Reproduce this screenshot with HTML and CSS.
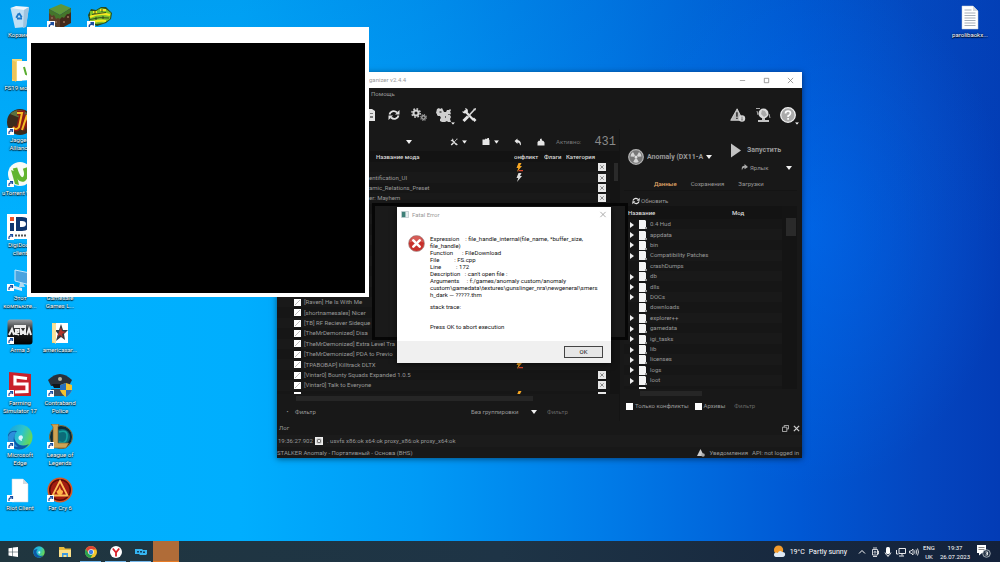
FILE: index.html
```html
<!DOCTYPE html>
<html lang="ru">
<head>
<meta charset="utf-8">
<title>Desktop</title>
<link rel="stylesheet" href="styles.css">
</head>
<body>
<svg class="defs" aria-hidden="true">
  <symbol id="shortcut" viewBox="0 0 7 7"><path fill="#fff" d="M0 0h7v7H0z"/><path fill="none" stroke="#1c4ea0" stroke-width="1.200" d="M2 6V4.200Q2 3 5 2.600M3 1.500h2.500V4"/></symbol>
  <symbol id="doc" viewBox="0 0 26 26"><path fill="#fff" stroke="#c4ccd4" stroke-width=".5" d="M5 2h11l5 5v18H5z"/><path fill="#d5dade" d="M16 2v5h5z"/></symbol>
  <symbol id="file" viewBox="0 0 8 9"><path fill="#f4f4f4" d="M0 0h6l1 1v8H0z"/><path fill="#999" d="M6 7h2v2H6z"/></symbol>
  <symbol id="caret" viewBox="0 0 6 4"><path fill="#f0f0f0" d="M0 0h6L3 4z"/></symbol>
  <symbol id="tri" viewBox="0 0 4 6"><path fill="#f0f0f0" d="M0 0l4 3-4 3z"/></symbol>
  <symbol id="bolt" viewBox="0 0 8 9"><path fill="currentColor" d="M3.500 0h3L5 3h2L2 9l1.300-4H1.500z"/></symbol>
  <symbol id="boltred" viewBox="0 0 8 9"><path fill="#f5a623" d="M3.500 0h3L5 3h2L2 9l1.300-4H1.500z"/><path fill="#d8432b" d="M4 7h4v1.300H3z"/></symbol>
  <symbol id="cat" viewBox="0 0 8 8"><path fill="#e8e8e8" d="M0 0h8v8H0z"/><path fill="none" stroke="#8a8a8a" d="M2.300 2.300l3.400 3.400M5.700 2.300L2.300 5.700"/></symbol>
  <symbol id="refresh" viewBox="0 0 12 12"><path fill="none" stroke="#e2e2e2" stroke-width="1.800" d="M1.500 5.500C2 2.500 6 .8 9 3.500M10.500 6.500C10 9.500 6 11.200 3 8.500"/><path fill="#e2e2e2" d="M11.500 1v4.500H7zM.5 11V6.500H5z"/></symbol>
  <symbol id="tools" viewBox="0 0 16 16"><path fill="none" stroke="#e6e6e6" stroke-width="2.200" d="M3.500 3.500l9 9.500"/><path fill="#e6e6e6" d="M1 4.500A3.500 3.500 0 0 0 5.500 6L7 4.500A3.500 3.500 0 0 0 4 1l1 2.500L3.500 4.500z"/><path fill="none" stroke="#d8d8d8" stroke-width="1.600" d="M13.500 2.500L7 9.500"/><path fill="none" stroke="#e6e6e6" stroke-width="3" d="M7 9.500L2.500 14"/><path fill="#e6e6e6" d="M12 2l3-1-.5 2.500zM11 12l2-1.500 2.500 2.500-2 2z"/></symbol>
  <symbol id="gear" viewBox="0 0 12 12"><circle cx="6" cy="6" r="3" fill="none" stroke="currentColor" stroke-width="2.400"/><circle cx="6" cy="6" r="5" fill="none" stroke="currentColor" stroke-width="1.800" stroke-dasharray="2 1.930"/></symbol>
  <symbol id="warn" viewBox="0 0 18 16"><path fill="#b9b9b9" stroke="#e8e8e8" stroke-width=".8" d="M8 1l6.500 13H.8z"/><path stroke="#222" stroke-width="1.600" d="M7.800 5v5M7.800 11v1.500"/><circle cx="13.500" cy="12" r="3.600" fill="#d6d6d6"/><path stroke="#444" d="M13.500 10v1M13.500 11.800v2.400"/></symbol>
</svg>

<main class="desktop">
  <div class="icons">
    <a class="item" href="#"><svg viewBox="0 0 26 26"><path fill="#cfe4f4" opacity=".92" d="M3.500 4L22 3l-3 20-11 1z"/><path fill="#eef6fc" d="M3.500 4L9 2l13 1-5 3z"/><path fill="#9fc3de" d="M17 6l5-3-3 20-3 1z"/><path fill="none" stroke="#1b76c8" stroke-width="1.800" stroke-dasharray="5 2" d="M12 9l3.500 5.500H8.800z"/></svg><span>Корзина</span></a>
    <a class="item" href="#"><svg viewBox="0 0 26 26"><path fill="#5d963a" d="M2 5l12-5 10 4-11 7z"/><path fill="#5b3d28" d="M2 5l11 6v14L2 19z"/><path fill="#43291b" d="M13 11l11-7v15l-11 6z"/><path fill="#44752b" d="M2 5l11 6v4l-2-1-2 1-2-4-2 1-3-3zM13 11l11-7v4l-2 2-2 0-3 4-2-1-2 2z"/><path fill="#83604a" d="M4 13h2v2H4zM8 17h2v2H8zM16 17h2v2h-2zM20 12h2v2h-2z"/><use href="#shortcut" x="0" y="17" width="8" height="8"/></svg></a>
    <a class="item" href="#"><svg viewBox="0 0 26 26"><path fill="#2a4a1a" d="M1 11l3-6 5 1 5-3 5 0 6 6-1 6-5 4-9 3-7-3z"/><path fill="#7cbf2c" d="M3 7l6 0 5-3 5 1 5 4-1 6-6 4-8 1-6-3z"/><path fill="none" stroke="#f6e820" stroke-width="2.200" d="M3 13q9-5 20-2M6 18q7-2 13-1M6 8l4 0M13 6l6 0"/><path fill="none" stroke="#26331b" stroke-width=".8" d="M3 15.500q10-3 19-1.500M5 10.500l14-2M8 7v3M15 5v3M9 13v3M16 12v3"/><use href="#shortcut" x="0" y="17" width="8" height="8"/></svg></a>

    <a class="item" href="#"><svg viewBox="0 0 26 26"><path fill="#f6d879" d="M5 2h10v22H5z"/><path fill="#fff" d="M10 4h13v19l-13 1z"/><path fill="#ecc45c" d="M5 3l4 2v20l-4-3z"/><circle cx="20" cy="14" r="6" fill="#fff"/><path fill="none" stroke="#5aad30" stroke-width="2" d="M17 10l2 7q3 2 5-1"/></svg><span>FS19 моды</span></a>
    <i></i><i></i>

    <a class="item" href="#"><svg viewBox="0 0 26 26"><circle cx="13" cy="13" r="13" fill="#3b2b1c"/><path fill="#5d7040" d="M3 5q9-8 18 0l-8 4z"/><path fill="none" stroke="#8f1b12" stroke-width="5" d="M10 4h5l-3 14q-3 4-6 0M15 21l5-15 2 14"/><path fill="none" stroke="#f4bd25" stroke-width="2" d="M10 4h5l-3 14q-3 4-6 0M15 21l5-15 2 14"/><use href="#shortcut" y="19" width="7" height="7"/></svg><span>Jagged Alliance</span></a>
    <i></i><i></i>

    <a class="item" href="#"><svg viewBox="0 0 26 26"><circle cx="13" cy="12" r="12" fill="#f8fbf6"/><path fill="none" stroke="#62b52f" stroke-width="4.500" d="M8 6q4 14 9 11 4-3 1-11"/><path fill="#62b52f" d="M4 8l5 2 3 13-4-1z"/><use href="#shortcut" y="18" width="7" height="7"/></svg><span>uTorrent Web</span></a>
    <i></i><i></i>

    <a class="item" href="#"><svg viewBox="0 0 26 26"><path fill="#fff" d="M0 0h26v25H0z"/><path fill="#e8502a" d="M3 3h4v4H3z"/><path fill="#10366e" d="M3 9h4v8H3z"/><path fill="none" stroke="#10366e" stroke-width="4" d="M11 5h4q6 0 6 5t-6 5h-4z"/><path stroke="#555" stroke-width="2" stroke-dasharray="2 1" d="M8 21.500h16"/><use href="#shortcut" y="19" width="7" height="7"/></svg><span>DigiDoc4 client</span></a>
    <i></i><i></i>

    <a class="item" href="#"><svg viewBox="0 0 26 26"><path fill="#4aa3df" stroke="#c6e7fa" d="M8 3l15 3v12L8 14z"/><path fill="#b4d9ef" d="M13 16h3l2 4h-6z"/><path fill="#dcecf7" d="M4 18l11 3v3L4 21z"/><use href="#shortcut" y="17" width="7" height="7"/></svg><span>Этот компьюте...</span></a>
    <a class="item" href="#"><svg viewBox="0 0 26 26"></svg><span>Gamesale Games L...</span></a>
    <i></i>

    <a class="item" href="#"><svg viewBox="0 0 26 26"><defs><linearGradient id="ar" x2="0" y2="1"><stop stop-color="#9a9fa3"/><stop offset=".45" stop-color="#222"/><stop offset="1" stop-color="#000"/></linearGradient></defs><rect width="25" height="25" x=".5" y=".5" rx="3" fill="url(#ar)"/><path fill="none" stroke="#eee" stroke-width="2" d="M2 16l3-6 2 6M9 16v-5h2.500v2L9 14l3 2M14 16v-5l2 3 2-3v5M20 16l2-6 2 6"/><path fill="#eee" d="M7 6h12v3H7z"/><use href="#shortcut" y="18" width="7" height="7"/></svg><span>Arma 3</span></a>
    <a class="item" href="#"><svg viewBox="0 0 26 26"><path fill="#f4d06a" d="M5 4h9l1 20H5z"/><path fill="#fff" d="M9 4h12v20H9z"/><path fill="#32393f" d="M14 5l2 6 5 0-4 4 1 6-4-3-5 4 2-7-3-4h4z"/><path fill="#b0352c" d="M14 8l1 4 4 1-4 2 1 4-3-3-3 2z"/><path fill="#f8e29c" d="M5 4l4 1v20l-4-3z"/></svg><span>americasar...</span></a>
    <i></i>

    <a class="item" href="#"><svg viewBox="0 0 26 26"><path fill="#c9202a" d="M2 0l22 2v22L2 24z"/><path fill="none" stroke="#fff" stroke-width="3.200" d="M20 6.500L8 5v7h12v7.500L8 20"/><use href="#shortcut" y="18" width="7" height="7"/></svg><span>Farming Simulator 17</span></a>
    <a class="item" href="#"><svg viewBox="0 0 26 26"><path fill="#29313b" d="M1 8q12-12 24 0l-3 6H4z"/><path fill="#11161c" d="M5 12h16l-2 4H7z"/><circle cx="13" cy="7" r="2" fill="#b8b7a0"/><path fill="#424b57" d="M4 17h13v7H6z"/><path fill="#f3c230" d="M13 13l6-2 6 2v5q-2 5-6 7-4-2-6-7z"/><path fill="#2570c0" d="M19 11l-6 2v5h6zM19 18h6q-2 5-6 7z"/><use href="#shortcut" y="18" width="7" height="7"/></svg><span>Contraband Police</span></a>
    <i></i>

    <a class="item" href="#"><svg viewBox="0 0 26 26"><defs><linearGradient id="eg" x2="1" y2=".4"><stop stop-color="#169ee0"/><stop offset=".6" stop-color="#2bc3cf"/><stop offset="1" stop-color="#65d65a"/></linearGradient></defs><circle cx="13" cy="13" r="12.500" fill="url(#eg)"/><path fill="#0d59a8" d="M1 11q2-5 9-4-5 5-1 11 5 6 13 2-4 6-11 5.500Q1 24 1 11z"/><path fill="#2c8edb" d="M9 8q-6 9 2 15-10 0-10-10 2-6 8-5z"/><path fill="#d8f5ff" d="M12 12q4-2 4 2-2 1-1 3-5-1-3-5z"/><use href="#shortcut" y="18" width="7" height="7"/></svg><span>Microsoft Edge</span></a>
    <a class="item" href="#"><svg viewBox="0 0 26 26"><circle cx="14" cy="13" r="11.500" fill="#0b2c38" stroke="#8b7440"/><circle cx="15" cy="13" r="8" fill="#0c6b78"/><path fill="none" stroke="#16a3a0" stroke-width="1.500" d="M12 8q9-3 8 5t-8 5"/><path fill="#cda353" stroke="#6f5325" stroke-width=".6" d="M4 0h8l-1 3v16h11l-3 5H4l2-3V3z"/><use href="#shortcut" y="18" width="7" height="7"/></svg><span>League of Legends</span></a>
    <i></i>

    <a class="item" href="#"><svg viewBox="0 0 26 26"><use href="#doc"/><use href="#shortcut" y="18" width="7" height="7"/></svg><span>Riot Client</span></a>
    <a class="item" href="#"><svg viewBox="0 0 26 26"><circle cx="13" cy="13" r="11.800" fill="#5e0d09" stroke="#d85a26" stroke-width="1.500"/><circle cx="13" cy="13" r="9.500" fill="#a31c11"/><path fill="none" stroke="#ffbd58" stroke-width="1.800" d="M13 4l7.500 14.500h-15z"/><path fill="#ffb347" d="M13 9q0 4 3 5 0 4-3 4t-3.500-4q2 0 3.500-5z"/><use href="#shortcut" y="18" width="7" height="7"/></svg><span>Far Cry 6</span></a>
    <i></i>
  </div>
  <div class="icons icons-right">
    <a class="item" href="#"><svg viewBox="0 0 26 26"><use href="#doc"/><path stroke="#8f9aa6" stroke-width=".8" d="M7.500 6h7M7.500 9h11M7.500 11.500h11M7.500 14h11M7.500 16.500h11M7.500 19h11M7.500 21.500h11"/></svg><span>parolibaokx...</span></a>
  </div>

  <section class="window organizer">
    <header class="titlebar">
      <span class="title">ganizer v2.4.4</span>
      <button class="winbtn" aria-label="Свернуть"><svg viewBox="0 0 8 8"><path stroke="#888" stroke-width=".8" d="M1 4h6"/></svg></button>
      <button class="winbtn" aria-label="Развернуть"><svg viewBox="0 0 8 8"><path fill="none" stroke="#777" stroke-width=".8" d="M1.500 1.500h5v5h-5z"/></svg></button>
      <button class="winbtn" aria-label="Закрыть"><svg viewBox="0 0 8 8"><path stroke="#777" stroke-width=".8" d="M1 1l6 6M7 1L1 7"/></svg></button>
    </header>
    <nav class="menu"><button>Помощь</button></nav>
    <div class="toolbar">
      <button aria-label="Архив"><svg viewBox="0 0 16 16"><path fill="#e4e4e4" d="M2 2h9l3 2v10H2z"/><path fill="#777" d="M9 6h3v1H9zM9 9h3v2H9z"/></svg></button>
      <button aria-label="Обновить"><svg viewBox="-2 -2 16 16"><use href="#refresh" width="12" height="12"/></svg></button>
      <button aria-label="Настройки"><svg viewBox="0 0 16 16"><g color="#d2d2d2"><use href="#gear" x="0" y="1" width="10" height="10"/></g><g color="#a5a5a5"><use href="#gear" x="9" y="7" width="7" height="7"/></g></svg></button>
      <button aria-label="Исполняемые файлы"><svg viewBox="0 0 16 16"><path fill="#d0d0d0" d="M1 2l2-1 1 1 2-1 1 2 1 2 2 0 1-2 2 0 1-1 1 1-1 2 1 1-1 2 1 2-1 2 1 3-3 0-1-1-2 1-3 0-2-1 0-2 1-1-1-2-2 0-1-1 0-1-1-1z"/><path fill="#666" d="M3.500 4h2v2h-2zM9 9h1v2H9zM12 7h2v1h-2z"/></svg><svg class="drop" viewBox="0 0 6 4"><use href="#caret"/></svg></button>
      <button aria-label="Инструменты"><svg viewBox="0 0 16 16"><use href="#tools"/></svg></button>
      <span class="grow"></span>
      <button aria-label="Предупреждения"><svg viewBox="0 0 18 16"><use href="#warn"/></svg></button>
      <button aria-label="Сеть"><svg viewBox="0 0 16 16"><circle cx="8.500" cy="6.500" r="5" fill="#dcdcdc"/><path fill="#aaa" d="M7 3l3 1 2 4-3 2-3-3z"/><path fill="none" stroke="#aaa" d="M1 1.500h4M2 4l1 4M14 7l1 4"/><path fill="#c4c4c4" d="M7 11h3v2h4v2H3v-2h4z"/></svg></button>
      <button aria-label="Справка"><svg viewBox="0 0 16 16"><circle cx="8" cy="8" r="7.300" fill="#aaa" stroke="#f0f0f0" stroke-width="1.300"/><path fill="none" stroke="#fff" stroke-width="1.700" d="M5.500 6.500q0-2.500 2.500-2.500t2.500 2.200q0 1.300-2.400 2.800v1M8.100 11v1.700"/></svg><svg class="drop" viewBox="0 0 6 4"><use href="#caret"/></svg></button>
    </div>

    <div class="panes">
      <section class="mods">
        <div class="modbar">
          <select class="profile" aria-label="Профиль"><option></option></select>
          <svg class="caret" viewBox="0 0 6 4"><use href="#caret"/></svg>
          <button class="mini first" aria-label="Действия"><svg viewBox="0 0 16 16"><use href="#tools"/></svg><svg class="sub" viewBox="0 0 6 4"><use href="#caret"/></svg></button>
          <button class="mini" aria-label="Папки"><svg viewBox="0 0 16 16"><path fill="#e6e6e6" d="M1 3h5l1-2 3 1 1-2h3v3l1 1v10H1z"/></svg><svg class="sub" viewBox="0 0 6 4"><use href="#caret"/></svg></button>
          <button class="mini" aria-label="Восстановить"><svg viewBox="0 0 16 16"><path fill="#e6e6e6" d="M1 6l6-5v3q7 1 7 9l-2 2q0-6-5-6v3z"/></svg></button>
          <button class="mini" aria-label="Резервная копия"><svg viewBox="0 0 16 16"><path fill="#e6e6e6" d="M1 15V8l3-3 2 1V2l3-1 1 4 3 1 2 3v6z"/></svg></button>
          <span class="active-label">Активно:</span>
          <output class="lcd">431</output>
        </div>
        <div class="modlist">
          <table>
            <colgroup><col class="c-name"><col class="c-conf"><col class="c-flag"><col class="c-cat"></colgroup>
            <thead><tr><th class="h-name">Название мода</th><th>онфликт</th><th>Флаги</th><th>Категория</th></tr></thead>
            <tbody>
              <tr><td></td><td><svg class="bolt" viewBox="0 0 8 9"><use href="#boltred"/></svg></td><td></td><td><svg class="cat" viewBox="0 0 8 8"><use href="#cat"/></svg></td></tr>
              <tr><td class="cut">entification_UI</td><td><svg class="bolt" viewBox="0 0 8 9"><use href="#bolt"/></svg></td><td></td><td><svg class="cat" viewBox="0 0 8 8"><use href="#cat"/></svg></td></tr>
              <tr><td class="cut">amic_Relations_Preset</td><td></td><td></td><td><svg class="cat" viewBox="0 0 8 8"><use href="#cat"/></svg></td></tr>
              <tr><td class="cut">er: Mayhem</td><td></td><td></td><td><svg class="cat" viewBox="0 0 8 8"><use href="#cat"/></svg></td></tr>
              <tr><td></td><td></td><td></td><td></td></tr>
              <tr><td></td><td></td><td></td><td></td></tr>
              <tr><td></td><td></td><td></td><td></td></tr>
              <tr><td></td><td></td><td></td><td></td></tr>
              <tr><td></td><td></td><td></td><td></td></tr>
              <tr><td></td><td></td><td></td><td></td></tr>
              <tr><td></td><td></td><td></td><td></td></tr>
              <tr><td></td><td></td><td></td><td></td></tr>
              <tr><td></td><td></td><td></td><td></td></tr>
              <tr><td><label><input type="checkbox" checked>[Raven] He Is With Me</label></td><td></td><td></td><td></td></tr>
              <tr><td><label><input type="checkbox" checked>[shortnamesalex] Nicer</label></td><td></td><td></td><td></td></tr>
              <tr><td><label><input type="checkbox" checked>[TB] RF Reciever Sideque</label></td><td></td><td></td><td></td></tr>
              <tr><td><label><input type="checkbox" checked>[TheMrDemonized] Disa</label></td><td></td><td></td><td></td></tr>
              <tr><td><label><input type="checkbox" checked>[TheMrDemonized] Extra Level Tra</label></td><td></td><td></td><td></td></tr>
              <tr><td><label><input type="checkbox" checked>[TheMrDemonized] PDA to Previo</label></td><td></td><td></td><td></td></tr>
              <tr><td><label><input type="checkbox" checked>[TPABOBAP] Killtrack DLTX</label></td><td><svg class="bolt" viewBox="0 0 8 9"><use href="#boltred"/></svg></td><td></td><td></td></tr>
              <tr><td><label><input type="checkbox" checked>[Vintar0] Bounty Squads Expanded 1.0.5</label></td><td></td><td></td><td><svg class="cat" viewBox="0 0 8 8"><use href="#cat"/></svg></td></tr>
              <tr><td><label><input type="checkbox" checked>[Vintar0] Talk to Everyone</label></td><td></td><td></td><td><svg class="cat" viewBox="0 0 8 8"><use href="#cat"/></svg></td></tr>
              <tr><td><label><input type="checkbox" aria-label="Мод"></label></td><td><svg class="bolt" viewBox="0 0 8 9"><use href="#boltred"/></svg></td><td></td><td><svg class="cat" viewBox="0 0 8 8"><use href="#cat"/></svg></td></tr>
            </tbody>
          </table>
          <div class="vscroll"><span></span></div>
        </div>
        <div class="hscroll"><span></span></div>
        <div class="modfoot">
          <button class="filter-toggle"><span class="dot">•</span>Фильтр</button>
          <select class="group" aria-label="Группировка"><option>Без группировки</option></select>
          <svg class="caret" viewBox="0 0 6 4"><use href="#caret"/></svg>
          <input class="modfilter" type="text" placeholder="Фильтр" aria-label="Фильтр модов">
        </div>
      </section>

      <section class="data">
        <div class="launch">
          <svg class="rad" viewBox="0 0 16 16"><circle cx="8" cy="8" r="7.300" fill="#777" stroke="#b4b4b4" stroke-width="1.200"/><circle cx="8" cy="8" r="1.500" fill="#ddd"/><path fill="#d4d4d4" d="M2.500 7.500q0-3 2.500-4.500l2 3.500-1 1.300zM13.500 7.500q0-3-2.500-4.500L9 6.500l1 1.300zM5.200 13l2-3.500h1.600l2 3.500q-2.800 1.500-5.600 0z"/></svg>
          <select class="exe" aria-label="Программа"><option>Anomaly (DX11-A</option></select>
          <svg class="caret" viewBox="0 0 6 4"><use href="#caret"/></svg>
          <div class="runs">
            <button class="run"><svg viewBox="0 0 10 14"><path fill="#c2c2c2" d="M0 0l10 7-10 7z"/></svg>Запустить</button>
            <button class="link"><svg viewBox="0 0 8 8"><path fill="#aaa" d="M1 7Q0 2 4 2V0l4 3.500L4 6V4Q2 4 1 7z"/></svg>Ярлык<svg class="caret end" viewBox="0 0 6 4"><use href="#caret"/></svg></button>
          </div>
        </div>
        <div class="tabs"><button class="on">Данные</button><button>Сохранения</button><button>Загрузки</button></div>
        <div class="tabpage">
          <button class="reload"><svg viewBox="0 0 12 12"><use href="#refresh"/></svg>Обновить</button>
          <div class="tree">
            <table>
              <thead><tr><th>Название</th><th class="c-mod">Мод</th></tr></thead>
              <tbody>
                <tr><td><svg class="tri" viewBox="0 0 4 6"><use href="#tri"/></svg><svg class="file" viewBox="0 0 8 9"><use href="#file"/></svg>0.4 Hud</td><td></td></tr>
                <tr><td><svg class="tri" viewBox="0 0 4 6"><use href="#tri"/></svg><svg class="file" viewBox="0 0 8 9"><use href="#file"/></svg>appdata</td><td></td></tr>
                <tr><td><svg class="tri" viewBox="0 0 4 6"><use href="#tri"/></svg><svg class="file" viewBox="0 0 8 9"><use href="#file"/></svg>bin</td><td></td></tr>
                <tr><td><svg class="tri" viewBox="0 0 4 6"><use href="#tri"/></svg><svg class="file" viewBox="0 0 8 9"><use href="#file"/></svg>Compatibility Patches</td><td></td></tr>
                <tr><td><svg class="tri" viewBox="0 0 4 6"></svg><svg class="file" viewBox="0 0 8 9"><use href="#file"/></svg>crashDumps</td><td></td></tr>
                <tr><td><svg class="tri" viewBox="0 0 4 6"><use href="#tri"/></svg><svg class="file" viewBox="0 0 8 9"><use href="#file"/></svg>db</td><td></td></tr>
                <tr><td><svg class="tri" viewBox="0 0 4 6"><use href="#tri"/></svg><svg class="file" viewBox="0 0 8 9"><use href="#file"/></svg>dlls</td><td></td></tr>
                <tr><td><svg class="tri" viewBox="0 0 4 6"><use href="#tri"/></svg><svg class="file" viewBox="0 0 8 9"><use href="#file"/></svg>DOCs</td><td></td></tr>
                <tr><td><svg class="tri" viewBox="0 0 4 6"></svg><svg class="file" viewBox="0 0 8 9"><use href="#file"/></svg>downloads</td><td></td></tr>
                <tr><td><svg class="tri" viewBox="0 0 4 6"><use href="#tri"/></svg><svg class="file" viewBox="0 0 8 9"><use href="#file"/></svg>explorer++</td><td></td></tr>
                <tr><td><svg class="tri" viewBox="0 0 4 6"><use href="#tri"/></svg><svg class="file" viewBox="0 0 8 9"><use href="#file"/></svg>gamedata</td><td></td></tr>
                <tr><td><svg class="tri" viewBox="0 0 4 6"><use href="#tri"/></svg><svg class="file" viewBox="0 0 8 9"><use href="#file"/></svg>igi_tasks</td><td></td></tr>
                <tr><td><svg class="tri" viewBox="0 0 4 6"><use href="#tri"/></svg><svg class="file" viewBox="0 0 8 9"><use href="#file"/></svg>lib</td><td></td></tr>
                <tr><td><svg class="tri" viewBox="0 0 4 6"><use href="#tri"/></svg><svg class="file" viewBox="0 0 8 9"><use href="#file"/></svg>licenses</td><td></td></tr>
                <tr><td><svg class="tri" viewBox="0 0 4 6"><use href="#tri"/></svg><svg class="file" viewBox="0 0 8 9"><use href="#file"/></svg>logs</td><td></td></tr>
                <tr><td><svg class="tri" viewBox="0 0 4 6"><use href="#tri"/></svg><svg class="file" viewBox="0 0 8 9"><use href="#file"/></svg>loot</td><td></td></tr>
                <tr><td><svg class="tri" viewBox="0 0 4 6"></svg><svg class="file" viewBox="0 0 8 9"><use href="#file"/></svg></td><td></td></tr>
              </tbody>
            </table>
            <div class="vscroll"><span></span></div>
          </div>
          <div class="hscroll short"><span></span></div>
          <div class="treefoot">
            <label><input type="checkbox">Только конфликты</label>
            <label><input type="checkbox">Архивы</label>
            <input class="treefilter" type="text" placeholder="Фильтр" aria-label="Фильтр файлов">
          </div>
        </div>
      </section>
    </div>

    <div class="loghead"><span>Лог</span>
      <button aria-label="Открепить"><svg viewBox="0 0 8 8"><path fill="none" stroke="#bbb" d="M2.500 2.500v-2h5v4h-2M.5 2.500h5v5h-5z"/></svg></button>
      <button aria-label="Закрыть лог"><svg viewBox="0 0 8 8"><path stroke="#ccc" stroke-width="1.500" d="M1 1l6 6M7 1L1 7"/></svg></button>
    </div>
    <div class="logline"><time>19:36:27.902</time><svg viewBox="0 0 9 9"><path fill="#eee" d="M0 0h9v9H0z"/><path fill="#777" d="M2 2h5v5H2z"/><path stroke="#fff" d="M3 3l3 3M6 3L3 6"/></svg><span>. usvfs x86:ok x64:ok proxy_x86:ok proxy_x64:ok</span></div>
    <footer class="status"><span>STALKER Anomaly - Портативный - Основа (BHS)</span><span class="grow"></span><svg viewBox="0 0 8 8"><path fill="#ccc" d="M3.500 0L7 7H0z"/><circle cx="6" cy="6" r="1.800" fill="#aaa"/></svg><span>Уведомления</span><span>API: not logged in</span></footer>
  </section>

  <div class="window splash"></div>

  <section class="window dialog" role="alertdialog" aria-label="Fatal Error">
    <header class="dlg-title"><svg viewBox="0 0 9 8"><path fill="#e8eef0" stroke="#9fb0b4" stroke-width=".6" d="M.5.5h8v7h-8z"/><path fill="#3f8078" d="M1 1h4v6H1z"/></svg><span>Fatal Error</span><button aria-label="Закрыть"><svg viewBox="0 0 8 8"><path stroke="#8a8a8a" stroke-width=".8" d="M1 1l6 6M7 1L1 7"/></svg></button></header>
    <div class="dlg-body">
      <svg viewBox="0 0 16 16"><circle cx="8" cy="8" r="7.500" fill="#c8312c" stroke="#a89a98" stroke-width=".7"/><path fill="#e07a74" opacity=".6" d="M1.500 7Q3 1 8 1t6.500 6q-6-3-13 0z"/><path stroke="#fff" stroke-width="2.400" stroke-linecap="round" d="M5 5l6 6M11 5l-6 6"/></svg>
      <div class="dlg-text">
<p>Expression    : file_handle_internal(file_name, *buffer_size,
file_handle)
Function      : FileDownload
File          : FS.cpp
Line          : 172
Description   : can't open file :
Arguments     : f:/games/anomaly custom/anomaly
custom\gamedata\textures\gunslinger_nra\newgeneral\smers
h_dark — ?????.thm</p>
<p>stack trace:</p>
<p class="last">Press OK to abort execution</p>
      </div>
    </div>
    <div class="dlg-foot"><button>OK</button></div>
  </section>

  <section class="window blank" aria-label="Окно"><div></div></section>
</main>

<footer class="taskbar">
  <button class="slot" aria-label="Пуск"><svg viewBox="0 0 12 12"><path fill="#fff" d="M1.500 2.300L5.500 1.700v4H1.500zM6 1.600L11 1v4.700H6zM1.500 6.200h4v4l-4-.6zM6 6.200h5V11l-5-.7z"/></svg></button>
  <button class="slot" aria-label="Edge"><svg viewBox="0 0 26 26"><circle cx="13" cy="13" r="12.500" fill="url(#eg)"/><path fill="#0d59a8" d="M1 11q2-5 9-4-5 5-1 11 5 6 13 2-4 6-11 5.500Q1 24 1 11z"/><path fill="#d8f5ff" d="M12 12q4-2 4 2-2 1-1 3-5-1-3-5z"/></svg></button>
  <button class="slot" aria-label="Проводник"><svg viewBox="0 0 12 12"><path fill="#e9b93a" d="M0 1h5l1 1.500h6V11H0z"/><path fill="#fbe08a" d="M0 4h12v7H0z"/><path fill="#3f9be0" d="M3 7h6v4H7.500V9h-3v2H3z"/></svg></button>
  <button class="slot running" aria-label="Chrome"><svg viewBox="0 0 12 12"><circle cx="6" cy="6" r="6" fill="#f5c52b"/><path fill="#dc4437" d="M.8 3A6 6 0 0 1 11.200 3L11.200 3.500H6L3.500 7.500z"/><path fill="#27a152" d="M.8 3A6 6 0 0 0 5.500 12L8.300 7.300 6 8.500 3.500 7.500z"/><circle cx="6" cy="6" r="2.800" fill="#fff"/><circle cx="6" cy="6" r="2.200" fill="#3c7ee8"/></svg></button>
  <button class="slot running" aria-label="Яндекс"><svg viewBox="0 0 12 12"><circle cx="6" cy="6" r="6" fill="#fff"/><path fill="none" stroke="#d8202a" stroke-width="1.800" d="M2.800 2.500L6 6.500l3.200-4M6 6v4.500"/></svg></button>
  <button class="slot running" aria-label="Приложение"><svg viewBox="0 0 12 12"><path fill="#35b5f2" d="M0 3h7l1 1h4v4l-1 1H5L4 8H0z"/><path fill="#14405e" d="M2 5h2v1.500H2zM5 5h2v1.500H5zM8 5.500h2V7H8z"/></svg></button>
  <button class="slot current" aria-label="Текущее окно"></button>
  <span class="grow"></span>
  <button class="weather"><svg viewBox="0 0 14 14"><circle cx="6" cy="5.500" r="5" fill="#f49b2b"/><path fill="#dfe9f4" d="M3 13q-3-1-1.500-4Q3 7.500 5 8.500 7 5 10 7.500q3.500 0 3 3.500-1 2-3 2z"/></svg><span>19°C</span><span>Partly sunny</span></button>
  <div class="tray">
    <svg viewBox="0 0 10 10"><path fill="none" stroke="#fff" d="M2 6.500L5 3.500l3 3"/></svg>
    <svg viewBox="0 0 10 10"><path fill="none" stroke="#fff" stroke-width=".8" d="M3 1h4M2.500 2.500h5v5.500h-5zM7.500 4.500l1-.5v3l-1-.5M3 9.500h4"/><circle cx="5" cy="5.200" r="1" fill="none" stroke="#fff" stroke-width=".7"/></svg>
    <svg viewBox="0 0 10 10"><rect x="3" y="0" width="4" height="7" rx="1.500" fill="#fff"/><path fill="none" stroke="#fff" stroke-width=".8" d="M2 5.500q1 3 3 3t3-3M5 8v2"/></svg>
    <svg viewBox="0 0 10 10"><path fill="none" stroke="#fff" stroke-width=".9" d="M3 1.500h6.500v5H3zM6 6.500v2M3 9h5M.5 3v4h2"/></svg>
    <svg viewBox="0 0 10 10"><path fill="none" stroke="#fff" stroke-width=".8" d="M.5 4h1.500L4 2v6L2 6H.5zM5.500 3.500q1 1.500 0 3M7 2.500q1.500 2.500 0 5M8.500 1.500q2 3.500 0 7"/></svg>
  </div>
  <div class="stack lang"><span>ENG</span><span>UK</span></div>
  <div class="stack clock"><span>19:37</span><span>26.07.2023</span></div>
  <button class="notes" aria-label="Уведомления"><svg viewBox="0 0 14 13"><path fill="#fff" d="M0 0h9v8H5l-3 2.500V8H0z"/><path stroke="#555" stroke-width=".7" d="M1.500 2.500h6M1.500 4.500h6"/><circle cx="9.500" cy="8.500" r="3.800" fill="#2c3a4d" stroke="#cfd5db" stroke-width=".7"/><path fill="none" stroke="#fff" stroke-width=".8" d="M8.500 7h2v1.500h-1 1V10h-2"/></svg></button>
</footer>
</body>
</html>
```
FILE: styles.css
```css
* { box-sizing: border-box; }
html, body { height: 100%; }
body {
  margin: 0;
  display: flex;
  flex-direction: column;
  overflow: hidden;
  font: 6px/8px Roboto, "Noto Sans", sans-serif;
  color: #999;
}
svg { display: block; flex: none; }
button, input, select {
  margin: 0;
  padding: 0;
  border: 0;
  background: none;
  color: inherit;
  font: inherit;
  appearance: none;
}
p { margin: 0; }
.defs { position: absolute; width: 0; height: 0; }
.grow { flex: 1; }

/* Desktop */
.desktop {
  position: relative;
  flex: 1;
  min-height: 0;
  display: flex;
  justify-content: space-between;
  padding: 4px 0 12px;
  background:
    radial-gradient(ellipse 200px 260px at 81% 42%, rgba(0, 120, 255, .4), transparent),
    linear-gradient(180deg, rgba(0, 80, 180, .16), transparent 45%),
    linear-gradient(90deg, #00b2ff 0, #00aefe 24%, #009af6 42%, #007ce8 60%, #0058d4 80%, #0446c0 92%, #033cb6);
}
.icons {
  display: grid;
  grid-template-columns: repeat(3, 40px);
  grid-template-rows: repeat(10, 1fr);
}
.icons-right { grid-template-columns: 40px; padding-right: 10px; }
.item {
  display: flex;
  flex-direction: column;
  align-items: center;
  gap: 1px;
  min-height: 0;
  color: #fff;
  text-align: center;
  text-decoration: none;
  text-shadow: 0 1px 1px #000, 0 0 2px #000;
}
.item svg { width: 26px; height: 26px; }

.window { position: absolute; }

/* Blank window */
.blank {
  left: 27px;
  top: 27px;
  width: 342px;
  height: 270px;
  display: flex;
  padding: 16px 4px 4px;
  background: #fff;
}
.blank div { flex: 1; background: #000; }

/* Organizer */
.organizer {
  left: 277px;
  top: 72px;
  width: 525px;
  display: flex;
  flex-direction: column;
  background: #181818;
  box-shadow: 0 1px 6px rgba(0, 0, 0, .5);
}
.titlebar {
  display: flex;
  align-items: center;
  height: 16px;
  padding: 0 0 0 92px;
  background: #fff;
  color: #999;
}
.title { flex: 1; }
.winbtn { display: flex; justify-content: center; width: 24px; }
.winbtn svg { width: 7px; height: 7px; }
.menu { height: 13px; padding: 2px 0 0 94px; line-height: 8px; }
.menu button { display: block; }
.toolbar {
  display: flex;
  align-items: center;
  gap: 9px;
  height: 28px;
  padding: 0 6px 0 84px;
}
.toolbar button { position: relative; display: flex; }
.toolbar svg { width: 16px; height: 16px; }
.toolbar .drop { position: absolute; right: -3px; bottom: -2px; width: 4px; height: 3px; }
.caret { width: 6px; height: 4px; }
.panes { display: flex; gap: 4px; }

.mods { width: 343px; border-right: 1px solid #141414; }
.modbar {
  display: flex;
  align-items: center;
  height: 22px;
  padding-top: 4px;
}
.profile { width: 129px; }
.mini { display: flex; align-items: center; gap: 4px; margin-right: 15px; }
.mini.first { margin-left: 38px; }
.mini svg { width: 8px; height: 8px; }
.mini .sub { width: 5px; height: 4px; }
.active-label { color: #777; }
.mini:nth-last-child(3) { margin-right: 11px; }
.lcd { margin-left: auto; padding-right: 3px; font: 12px/16px "Liberation Mono", monospace; color: #8a8a8a; }

.modlist { display: flex; height: 243px; overflow: hidden; background: #161616; }
table { border-collapse: collapse; table-layout: fixed; }
th, td { height: 10px; padding: 0; line-height: 10px; text-align: left; white-space: nowrap; }
th { font-weight: 500; color: #d8d8d8; }
thead tr { height: 11px; background: #131313; }
tbody tr:nth-child(even) { background: #191919; }
.modlist table { width: 333px; height: 250px; }
.modlist th { overflow: hidden; }
.c-name { width: 237px; }
.c-conf { width: 30px; }
.c-flag { width: 22px; }
.h-name { padding-left: 99px; }
td.cut { padding-left: 92px; }
.modlist label { display: flex; align-items: center; gap: 3px; padding-left: 17px; }
input[type="checkbox"] { width: 7px; height: 7px; background: #fff; }
input[type="checkbox"]:checked {
  background: linear-gradient(135deg, transparent 46%, #bbb 46%, #bbb 56%, transparent 56%) center / 5px 5px no-repeat, #fff;
}
.bolt { width: 8px; height: 9px; margin-left: 1px; color: #ddd; }
.cat { width: 8px; height: 8px; margin-left: auto; margin-right: 4px; }
.vscroll { flex: 1; padding: 12px 1px 0 4px; background: #141414; }
.vscroll span { display: block; height: 18px; background: #2a2a2a; }
.hscroll { height: 8px; padding: 2px 86px 1px 19px; }
.hscroll span { display: block; height: 5px; background: #262626; }
.modfoot { display: flex; align-items: center; height: 19px; }
.filter-toggle { display: flex; gap: 6px; margin-left: 9px; }
.dot { width: 3px; }
.group { width: 60px; margin-left: auto; }
.modfilter { width: 82px; padding-left: 10px; }
::placeholder { color: #666; opacity: 1; }

.data { flex: 1; min-width: 0; padding-right: 5px; }
.launch { display: flex; align-items: center; height: 48px; padding: 8px 0 0 4px; }
.rad { width: 16px; height: 16px; margin-right: 3px; }
.exe { width: 59px; font: bold 7px/10px Roboto, sans-serif; }
.runs { flex: 1; display: flex; flex-direction: column; gap: 6px; margin-left: 19px; }
.run { display: flex; align-items: center; gap: 6px; height: 15px; font: bold 7px/10px Roboto, sans-serif; }
.run svg { width: 10px; height: 15px; }
.link { display: flex; align-items: center; gap: 2px; padding-left: 10px; }
.link svg { width: 7px; height: 7px; }
.link .end { width: 6px; height: 4px; margin-left: auto; margin-right: 5px; }
.tabs { display: flex; gap: 14px; height: 13px; padding-left: 30px; }
.tabs .on { color: #e0a868; font-weight: 500; }
.tabpage { padding-top: 4px; border-top: 1px solid #141414; }
.reload { display: flex; align-items: center; gap: 1px; height: 11px; padding-left: 8px; }
.reload svg { width: 8px; height: 8px; }
.tree { display: flex; height: 183px; overflow: hidden; background: #161616; }
.tree thead tr { height: 13px; }
.tree table { width: 158px; height: 190px; }
.tree th { padding-left: 4px; }
.tree .c-mod { width: 53px; padding-left: 3px; }
.tree td svg { display: inline-block; vertical-align: middle; }
.tri { width: 4px; height: 6px; margin: 0 5px 0 6px; }
.file { width: 8px; height: 9px; margin-right: 3px; }
.hscroll.short { padding: 2px 95px 1px 16px; }
.treefoot { display: flex; align-items: center; gap: 6px; height: 18px; padding-left: 2px; }
.treefoot label { display: flex; align-items: center; gap: 2px; white-space: nowrap; }
.treefilter { flex: 1; min-width: 0; padding-left: 3px; }

.loghead { display: flex; align-items: center; gap: 4px; height: 14px; padding: 0 2px; }
.loghead span { flex: 1; }
.loghead svg { width: 7px; height: 7px; }
.logline { display: flex; align-items: center; gap: 4px; height: 12px; padding-left: 1px; background: #1b1b1b; }
.logline svg { width: 8px; height: 8px; }
.logline time { width: 33px; }
.status { display: flex; align-items: center; gap: 4px; height: 11px; padding-right: 3px; }
.status svg { width: 8px; height: 8px; }

/* Splash */
.splash {
  left: 372px;
  top: 203px;
  width: 256px;
  height: 137px;
  border: 3px solid #060606;
  background: #1a1a1a;
}

/* Error dialog */
.dialog {
  left: 397px;
  top: 207px;
  width: 214px;
  background: #fff;
  color: #111;
  box-shadow: 0 1px 6px rgba(0, 0, 0, .6);
}
.dlg-title { display: flex; align-items: center; gap: 3px; height: 15px; padding: 0 4px; color: #999; }
.dlg-title span { flex: 1; }
.dlg-title svg { width: 8px; height: 7px; }
.dlg-body { display: flex; align-items: flex-start; gap: 5px; padding: 13px 10px 11px 11px; }
.dlg-body > svg { width: 17px; height: 17px; }
.dlg-text { line-height: 7px; white-space: pre; display: flex; flex-direction: column; }
.dlg-text p { margin-bottom: 5px; }
.dlg-text .last { margin: 8px 0 0; }
.dlg-foot { display: flex; justify-content: flex-end; padding: 5px 8px; background: #f0f0f0; }
.dlg-foot button { width: 39px; height: 12px; border: 1px solid #444; background: #e6e6e6; }

/* Taskbar */
.taskbar {
  display: flex;
  align-items: center;
  height: 21px;
  background: linear-gradient(90deg, #20363f, #1e3446 50%, #13213a);
  color: #fff;
  font-size: 7px;
}
.slot { display: flex; align-items: center; justify-content: center; width: 26px; height: 21px; }
.slot svg { width: 12px; height: 12px; }
.running { width: 25px; background: linear-gradient(#76b9ed, #76b9ed) center bottom / 21px 1px no-repeat; }
.current { width: 26px; background: #b06c38; border-bottom: 1px solid #e87b25; }
.weather { display: flex; align-items: center; gap: 4px; white-space: nowrap; }
.weather svg { width: 13px; height: 13px; }
.tray { display: flex; gap: 3px; margin: 0 2px 0 10px; }
.tray svg { width: 10px; height: 10px; }
.stack { display: flex; flex-direction: column; align-items: center; font-size: 6px; line-height: 9px; }
.lang { width: 16px; }
.clock { width: 36px; }
.notes { padding: 0 9px 0 4px; }
.notes svg { width: 14px; height: 13px; }
```
